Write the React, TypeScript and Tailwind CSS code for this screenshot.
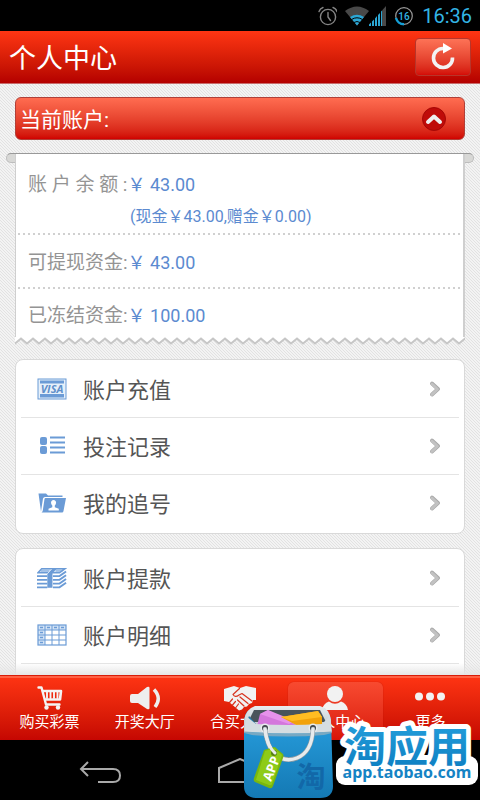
import { useState } from "react";
import type { ReactNode } from "react";

const BLUE = "#6b9bd6";

function StatusBar() {
  return (
    <div className="flex h-[31px] shrink-0 items-center justify-end bg-black pr-2 font-['Roboto',sans-serif]">
      <svg width="20" height="20" viewBox="0 0 20 20" fill="none" stroke="#858585" strokeWidth="1.4" strokeLinecap="round">
        <circle cx="11" cy="11" r="7.6" />
        <path d="M11 6.5V11l2.5 3.5M2 5.5Q3 2.500 6 1.500M20 5.500Q19 2.500 16 1.500" />
      </svg>
      <svg className="ml-2" width="24" height="20" viewBox="0 0 24 20">
        <path d="M0 5Q12-4 24 5L12 19.500Z" fill="#484848" />
        <path d="M5 11q7-4.500 14 0L12 19.500Z" fill="#2ba6d4" />
        <path d="M6.500 13.500q5.500-3.500 11 0M9 16.500q3-2 6 0" stroke="#000" strokeWidth="1" fill="none" />
      </svg>
      <svg width="17" height="20" viewBox="0 0 17 20">
        <path d="M13 4.500L17 0V20H13Z" fill="#484848" />
        <path d="M0 20V18.500L2 16.500V20ZM3 20V15.500L5 13.500V20ZM6 20V12.500L8 10V20ZM9 20V9L11 7V20ZM12 20V5.500L13 4.500V20Z" fill="#2ba6d4" />
      </svg>
      <svg className="ml-2" width="20" height="20" viewBox="0 0 20 20">
        <circle cx="10" cy="10" r="8.300" fill="none" stroke="#9a9a9a" strokeWidth="1.200" />
        <path d="M2 12A8.300 8.300 0 0 0 10 18.300" fill="none" stroke="#149fd6" strokeWidth="2.400" />
        <text x="10" y="13.500" fontSize="10" fontWeight="500" textAnchor="middle" fill="#33b5e5">16</text>
      </svg>
      <span className="ml-2 text-[20px] leading-6 text-[#33b5e5]">16:36</span>
    </div>
  );
}

function VisaIcon() {
  return (
    <svg width="30" height="22" viewBox="0 0 30 22">
      <rect x="1" y="1" width="28" height="20" fill="#e6f0fa" stroke={BLUE} />
      <path d="M3 2.500H27V5.500H3ZM3 16H27V19.500H3Z" fill={BLUE} />
      <text x="15" y="14.800" fontSize="11" fontWeight="700" fontStyle="italic" textAnchor="middle" fill="#5f8fca" fontFamily="Open Sans, sans-serif">VISA</text>
    </svg>
  );
}

function RecordsIcon() {
  return (
    <svg width="30" height="22" viewBox="0 0 30 22" fill={BLUE}>
      <rect x="3" y="2" width="7" height="8" rx="2" />
      <rect x="3" y="11" width="7" height="8" rx="2" />
      <path d="M13 2.500H28M13 7.500H28M13 12.500H28M13 17.500H28" stroke={BLUE} strokeWidth="2.200" />
    </svg>
  );
}

function FolderIcon() {
  return (
    <svg width="30" height="22" viewBox="0 0 30 22" fill={BLUE}>
      <path d="M1.500 1.500H9L11 3.500H25.500V5H8Q6.500 5 6 6.500L4 19.500Z" />
      <path d="M8.500 6H29L26.500 19Q26.300 20.500 25 20.500H4.500Q5.500 20 5.800 18.500L7.500 7Q7.700 6 8.500 6Z" />
      <path d="M16.500 8a2.600 2.600 0 0 1 2.500 3.200q-.2 1.600-1.200 2.300v1.700l4 1.600V18.500H11.500V16.800l3.800-1.600V13.500q-1-.7-1.200-2.300A2.600 2.600 0 0 1 16.500 8Z" fill="#fff" />
    </svg>
  );
}

function MoneyIcon() {
  return (
    <svg width="32" height="22" viewBox="0 0 32 22" fill="none" stroke={BLUE} strokeWidth="2">
      <path d="M1 5.500L5 1H30L24 5.500Z" fill="#d3e3f5" strokeWidth="1.600" />
      <path d="M4 3.500H13M20 3.500H27" strokeWidth="1" />
      <path d="M0 9H11M17 9H24L31 4M0 13H11M17 13H24L31 8M0 17H11M17 17H24L31 12M0 21H11M17 21H24L31 16" />
      <path d="M11 6L15.500 1H21L16.500 6V21.500H11Z" fill={BLUE} stroke="none" />
      <path d="M11 6.500L15.500 1.500" stroke="#fff" strokeWidth=".8" />
    </svg>
  );
}

function TableIcon() {
  return (
    <svg width="30" height="22" viewBox="0 0 30 22" fill="none" stroke={BLUE}>
      <path d="M1 1H29V6H8V21H1Z" fill="#d3e3f5" stroke="none" />
      <rect x="1" y="1" width="28" height="20" strokeWidth="1.200" />
      <path d="M1 6H29M1 11H29M1 16H29M8 1V21M15 1V21M22 1V21" />
      <path d="M3 3.500H6M10 3.500H13M17 3.500H20M24 3.500H27M3 8.500H6M3 13.500H6M3 18.500H6" strokeWidth="1.600" />
    </svg>
  );
}

type MenuItem = { label: string; icon: ReactNode };

const accountMenu: MenuItem[] = [
  { label: "账户充值", icon: <VisaIcon /> },
  { label: "投注记录", icon: <RecordsIcon /> },
  { label: "我的追号", icon: <FolderIcon /> },
];

const fundsMenu: MenuItem[] = [
  { label: "账户提款", icon: <MoneyIcon /> },
  { label: "账户明细", icon: <TableIcon /> },
];

function MenuRow({ label, icon }: MenuItem) {
  return (
    <li className="mx-[5px] border-b border-[#e4e4e4]">
      <a href="#" className="flex h-14 items-center pr-[18px] pl-4">
        <span className="flex w-[30px] shrink-0 justify-center">{icon}</span>
        <span className="ml-4 flex-1 pt-1 text-[22px] leading-8 text-[#555]">{label}</span>
        <svg width="12" height="16" viewBox="0 0 12 16" fill="none" strokeLinecap="round" strokeLinejoin="round">
          <path d="M3 2.500L9 8L3 13.500" stroke="#a8a8a8" strokeWidth="3.800" />
          <path d="M3 3L8.500 8.200L3 13.500" stroke="#c2c2c2" strokeWidth="2.800" />
        </svg>
      </a>
    </li>
  );
}

function DottedLine() {
  return <div className="mx-0.5 h-0.5 bg-[repeating-linear-gradient(90deg,#d0d0d0_0_2px,transparent_2px_5px)]" />;
}

function Amount({ children }: { children: ReactNode }) {
  return <span className="text-[18px] text-[#5b8ad0]">{children}</span>;
}

function Receipt() {
  return (
    <section className="-mx-[9px] mt-[13px]">
      <div className="h-[10px] rounded-full border border-[#bdbdbd] border-t-[#999] bg-[#d8d8d6]" />
      <div className="relative mx-[9px] -mt-[9px]">
        <div className="border-r-2 border-l border-[#cfcfcf] bg-white text-[19px] leading-6 text-[#949494]">
          <div className="px-3 pt-[19px] pb-1">
            <p>账 户 余 额 :<Amount>￥ 43.00</Amount></p>
            <p className="pt-2 pl-[102px] text-[16px] text-[#5b8ad0]">(现金￥43.00,赠金￥0.00)</p>
          </div>
          <DottedLine />
          <p className="px-3 pt-4 pb-3">可提现资金:<Amount>￥ 43.00</Amount></p>
          <DottedLine />
          <p className="px-3 pt-[15px] pb-[9px]">已冻结资金:<Amount>￥ 100.00</Amount></p>
        </div>
        <svg className="block h-2 w-full">
          <defs>
            <pattern id="teeth" width="12" height="8" patternUnits="userSpaceOnUse">
              <path d="M-1 0H13V6L12 6.500L6 1.500L0 6.500L-1 6Z" fill="#fff" />
              <path d="M-1 5.700L0 6.500L6 1.500L12 6.500L13 5.700" fill="none" stroke="#c6c6c6" strokeWidth="2" />
            </pattern>
          </defs>
          <rect width="100%" height="8" fill="url(#teeth)" />
        </svg>
      </div>
    </section>
  );
}

function CartIcon() {
  return (
    <svg width="26" height="24" viewBox="0 0 26 24" fill="none" stroke="#f4f4f4" strokeLinecap="round" strokeLinejoin="round">
      <path d="M1.500 1.500H4.500L9 18.500H22.500" strokeWidth="2.400" />
      <path d="M6 5H24L23 13.500H8.500" strokeWidth="2.600" />
      <path d="M10 5V12M13.500 5V12M17 5V12M20.500 5V12" strokeWidth="1.900" />
      <circle cx="9.500" cy="21.500" r="2.200" fill="#f4f4f4" stroke="none" />
      <circle cx="21" cy="21.500" r="2.200" fill="#f4f4f4" stroke="none" />
    </svg>
  );
}

function SpeakerIcon() {
  return (
    <svg width="32" height="24" viewBox="0 0 32 24" fill="#eee">
      <path d="M3 8H9L18 1Q20.500 0 20.500 2V22Q20.500 24 18 23L9 17H3Q1 17 1 15V10Q1 8 3 8Z" />
      <path d="M25 3.500Q33 12 26 21" fill="none" stroke="#eee" strokeWidth="3.400" />
    </svg>
  );
}

function HandshakeIcon() {
  return (
    <svg width="32" height="25" viewBox="0 0 32 25">
      <path d="M0 3L10 0L16 2L22 0L32 2V14H29L28 17L25 18L23 20.500L20 21L18 23.500L15 24.500L5 16L0 15Z" fill="#f2f2f2" />
      <g fill="none" stroke="#d8341f" strokeWidth="1.200" strokeLinecap="round" strokeLinejoin="round">
        <path d="M15.500 2.500L9 8.500Q11 12 15 9L18 7.500L28 15" />
        <path d="M16 11L24 17.500M13.500 14L20 20M5.500 16.500L8.500 13M8.500 19L11.500 15.500M11.500 22L14.500 18" />
      </g>
    </svg>
  );
}

function PersonIcon() {
  return (
    <svg width="28" height="24" viewBox="0 0 28 24" fill="#f2f2f2">
      <circle cx="14" cy="8" r="8" />
      <path d="M1 24Q2 17.500 8 15.500Q14 20 20 15.500Q26 17.500 27 24Z" />
    </svg>
  );
}

function MoreIcon() {
  return (
    <svg width="32" height="24" viewBox="0 0 32 24" fill="#f2f2f2">
      <circle cx="5" cy="10.500" r="4" />
      <circle cx="16" cy="10.500" r="4" />
      <circle cx="27" cy="10.500" r="4" />
    </svg>
  );
}

const tabs = [
  { label: "购买彩票", icon: <CartIcon /> },
  { label: "开奖大厅", icon: <SpeakerIcon /> },
  { label: "合买大厅", icon: <HandshakeIcon /> },
  { label: "个人中心", icon: <PersonIcon />, active: true },
  { label: "更多", icon: <MoreIcon /> },
];

function TabBar() {
  return (
    <nav className="flex h-[65px] shrink-0 border-t border-[#d81c08] bg-gradient-to-b from-[#ff3413] to-[#c50602] px-0.5 pt-1.5 shadow-[inset_0_2px_0_#ff6043]">
      {tabs.map((tab) => (
        <a
          key={tab.label}
          href="#"
          className={`flex flex-1 flex-col items-center rounded-t-md pt-1 text-[15px] leading-5 whitespace-nowrap text-white ${
            tab.active ? "bg-gradient-to-b from-[#f84a30] to-[#d91307] shadow-[0_0_1px_#a51208]" : ""
          }`}
        >
          <span className="flex h-[26px] items-start">{tab.icon}</span>
          {tab.label}
        </a>
      ))}
    </nav>
  );
}

function SystemNav() {
  return (
    <div className="flex h-[60px] shrink-0 items-center justify-center gap-[92px] bg-black pt-2">
      <button aria-label="返回">
        <svg width="48" height="32" viewBox="0 0 48 32" fill="none" stroke="#a9a9a9" strokeWidth="2">
          <path d="M12 4L5 11L12 18M5 11H37Q44 11 44 17.500Q44 24 37 24H22" />
        </svg>
      </button>
      <button aria-label="主屏幕">
        <svg width="48" height="32" viewBox="0 0 48 32" fill="none" stroke="#a9a9a9" strokeWidth="2">
          <path d="M3 24V10L24 1L45 10V24Z" />
        </svg>
      </button>
      <button aria-label="最近任务">
        <svg width="48" height="32" viewBox="0 0 48 32" fill="none" stroke="#a9a9a9" strokeWidth="2">
          <path d="M5 9H35V24H5ZM12 5H42V20" />
        </svg>
      </button>
    </div>
  );
}

function StoreBadge() {
  return (
    <div className="pointer-events-none absolute right-0 bottom-0">
      <svg width="240" height="98" viewBox="0 0 240 98">
        <defs>
          <linearGradient id="bag" x2="0" y2="1">
            <stop stopColor="#2aa2e2" />
            <stop offset="1" stopColor="#1479b4" />
          </linearGradient>
          <linearGradient id="brand" x2="0" y2="1">
            <stop stopColor="#27a4e0" />
            <stop offset="1" stopColor="#0c7cbf" />
          </linearGradient>
          <linearGradient id="rim" x2="0" y2="1">
            <stop stopColor="#e8edf0" />
            <stop offset="1" stopColor="#b9c4ca" />
          </linearGradient>
        </defs>
        <path d="M4 18Q5 8 15 5H80Q89 7 91 18L93 84Q93 96 80 96H17Q4 96 4 84Z" fill="url(#bag)" />
        <path d="M15 4H80Q89 6 91 18V28H4V18Q6 7 15 4Z" fill="url(#rim)" />
        <path d="M14 8H80L86 20H8Z" fill="#49545b" />
        <path d="M9 14L16 22H6Z" fill="#2178a9" />
        <path d="M17 24L20 12L28 8L58 24Z" fill="#d477dc" />
        <path d="M20 12L28 8L55 19L49 22Z" fill="#e692eb" />
        <path d="M41 15L78 9L82 15V24H58Z" fill="#f2a20a" />
        <path d="M41 15L78 9L82 15L52 19Z" fill="#ffbd22" />
        <path d="M6 14L16 22Q48 24 82 22L90 14L92 30H84Q50 33 12 30H4Z" fill="#d5dde1" />
        <path d="M12 30Q48 33 84 30L92 29V31L84 33Q48 36 12 33L4 31V29Z" fill="#9db0ba" opacity=".7" />
        <circle cx="25" cy="26" r="4.500" fill="#e9edef" />
        <circle cx="73" cy="26" r="4.500" fill="#e9edef" />
        <circle cx="25" cy="26" r="3" fill="#3e444a" />
        <circle cx="73" cy="26" r="3" fill="#3e444a" />
        <path d="M25 27Q27 44 34 51Q44 61 57 56Q72 50 73 27" fill="none" stroke="#8d9ba3" strokeWidth="4.600" strokeLinecap="round" />
        <path d="M25 27Q27 44 34 51Q44 61 57 56Q72 50 73 27" fill="none" stroke="#e7ebed" strokeWidth="3.400" strokeLinecap="round" />
        <text x="71" y="86" fontSize="29" fontWeight="700" textAnchor="middle" fill="#1268a8">淘</text>
        <path d="M24 48L34 45Q36 45 37 47L43 52Q44 54 43 56L33 84Q32 87 29 86L15 80Q13 79 14 76Z" fill="#79b70e" />
        <path d="M25 49L34 46L42 53L32 82Q31 84 29 83L16 78Z" fill="#8ecb18" />
        <text x="0" y="0" fontSize="13" fontWeight="700" fill="#fff" fontFamily="Open Sans, sans-serif" transform="translate(31 80) rotate(-69)">APP</text>
        <circle cx="34" cy="51" r="3" fill="#557f15" />
        <path d="M25 30Q28 45 35 51" fill="none" stroke="#e7ebed" strokeWidth="3" strokeLinecap="round" />
        <rect x="96" y="54" width="142" height="29" rx="9" fill="#fff" />
        <text x="167" y="60" fontSize="42" fill="url(#brand)" stroke="#fff" strokeWidth="10" strokeLinejoin="round" style={{ paintOrder: "stroke" }} textAnchor="middle" fontWeight="700" fontFamily="Noto Sans CJK SC, sans-serif">淘应用</text>
        <text x="167" y="76" fontSize="16" fill="#1583c4" textAnchor="middle" fontFamily="Noto Sans, sans-serif" fontWeight="700">app.taobao.com</text>
      </svg>
    </div>
  );
}

export default function App() {
  const [open, setOpen] = useState(true);

  return (
    <div className="relative flex h-screen flex-col overflow-hidden bg-black font-['Roboto','Noto_Sans_CJK_SC',sans-serif]">
      <StatusBar />

      <header className="flex h-[53px] shrink-0 items-center justify-between border-b border-[#c86a6a] bg-gradient-to-b from-[#ff3513] to-[#b40000] px-[9px]">
        <h1 className="pt-1 text-[27px] leading-9 text-white">个人中心</h1>
        <button
          aria-label="刷新"
          className="flex h-[38px] w-14 items-center justify-center rounded border border-[#b8352a] bg-gradient-to-b from-[#fd7256] to-[#d40a06]"
        >
          <svg width="26" height="28" viewBox="0 0 26 28">
            <path d="M22.500 14.500A9.500 9.500 0 1 1 13 5.500" fill="none" stroke="#f3f3f3" strokeWidth="3.600" />
            <path d="M13 0L22 5.500L13 10.500Z" fill="#fff" />
          </svg>
        </button>
      </header>

      <main className="relative min-h-0 flex-1 overflow-hidden bg-[#ececec] bg-[linear-gradient(45deg,#f3f3f3_25%,#e2e2e2_25%_50%,#f3f3f3_50%_75%,#e2e2e2_75%)] bg-size-[3px_3px] px-[15px] pt-[13px]">
        <button
          onClick={() => setOpen(!open)}
          aria-expanded={open}
          className="flex h-[43px] w-full items-center justify-between rounded-md border border-[#b04038] bg-gradient-to-b from-[#ff6c50] to-[#d00000] pr-[18px] pl-1 text-[21px] leading-7 text-white"
        >
          <span className="pt-0.5">当前账户:</span>
          <svg width="24" height="24" viewBox="0 0 24 24" fill="none">
            <circle cx="12" cy="12" r="11.500" fill="#bf0b09" stroke="#a50806" />
            <path d="M6 15L12 9.500L18 15" stroke="#eee" strokeWidth="4" strokeLinecap="round" strokeLinejoin="round" />
          </svg>
        </button>

        {open && <Receipt />}

        <ul className="mt-[14px] rounded-lg border border-[#d9d9d9] bg-white py-px [&>li:last-child]:border-transparent">
          {accountMenu.map((item) => (
            <MenuRow key={item.label} {...item} />
          ))}
        </ul>

        <ul className="mt-[14px] rounded-t-lg border border-[#d9d9d9] bg-white pt-px pb-4">
          {fundsMenu.map((item) => (
            <MenuRow key={item.label} {...item} />
          ))}
        </ul>

        {/* content fades out above the tab bar */}
        <div className="absolute inset-x-0 bottom-0 h-3 bg-gradient-to-b from-transparent to-[#e6e6e6]" />
      </main>

      <TabBar />
      <SystemNav />
      <StoreBadge />
    </div>
  );
}
